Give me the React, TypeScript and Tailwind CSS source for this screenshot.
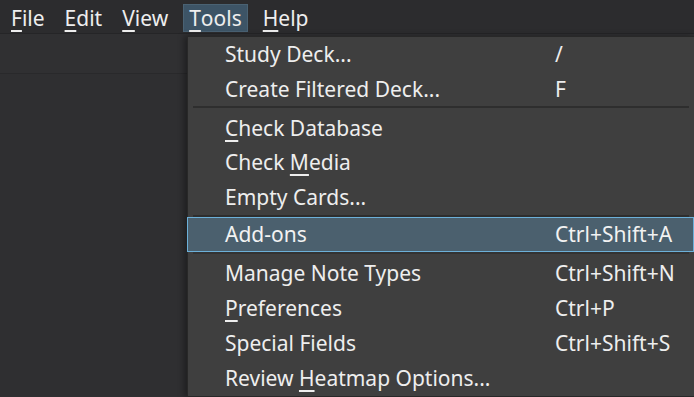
import React from "react";

const font = { fontFamily: '"Noto Sans", "Open Sans", sans-serif' };

function Mn({ text, idx }: { text: string; idx?: number }) {
  if (idx === undefined) return <>{text}</>;
  return (
    <>
      {text.slice(0, idx)}
      <span className="underline decoration-[2px] underline-offset-[4px]">{text[idx]}</span>
      {text.slice(idx + 1)}
    </>
  );
}

function Row({ label, idx, sc, h = "h-[35px]" }: { label: string; idx?: number; sc?: string; h?: string }) {
  return (
    <div className={`flex items-center ${h} pl-[37px] text-[#eeeeee]`}>
      <span className="w-[330px] whitespace-nowrap">
        <Mn text={label} idx={idx} />
      </span>
      <span className="whitespace-nowrap">{sc}</span>
    </div>
  );
}

export default function App() {
  return (
    <div className="relative w-[694px] h-[397px] overflow-hidden bg-[#2f2f31] text-[21px] leading-none" style={font}>
      {/* menubar */}
      <div className="flex h-[34px] items-stretch gap-[10px] bg-[#2c2c2e] pl-[6px] pt-[4px] pb-[1px] border-b border-[#252527] text-[#eeeeee]">
        {[
          ["File", 0],
          ["Edit", 0],
          ["View", 0],
          ["Tools", 0],
          ["Help", 0],
        ].map(([t, i]) => (
          <div
            key={t as string}
            className={`flex items-center px-[5px] ${t === "Tools" ? "bg-[#3d5466] border border-[#4a6273] px-[4px]" : ""}`}
          >
            <Mn text={t as string} idx={i as number} />
          </div>
        ))}
      </div>
      {/* toolbar strip */}
      <div className="h-[40px] bg-[#303032] border-b border-[#29292b]" />

      {/* dropdown menu */}
      <div className="absolute left-[187px] top-[36px] w-[508px] h-[361px] bg-[#3f3f3f] border border-[#282828] shadow-[-3px_0_6px_rgba(0,0,0,0.35)]">
        <Row label="Study Deck..." sc="/" />
        <Row label="Create Filtered Deck..." sc="F" h="h-[34px]" />
        <div className="h-[5px] pt-0">
          <div className="mx-[5px] h-[2px] bg-[#2e2e2e]" />
        </div>
        <Row label="Check Database" idx={0} h="h-[34px]" />
        <Row label="Check Media" idx={6} />
        <Row label="Empty Cards..." />
        <div className="h-[2px] mx-[5px] bg-[#2e2e2e]" />
        <div className="flex items-center h-[35px] -ml-px pl-[37px] bg-[#4b606e] border border-[#6cb0d9] text-[#f2f2f2]">
          <span className="w-[330px] whitespace-nowrap">Add-ons</span>
          <span className="whitespace-nowrap">Ctrl+Shift+A</span>
        </div>
        <div className="h-[4px]">
          <div className="mx-[5px] h-[2px] bg-[#333333]" />
        </div>
        <Row label="Manage Note Types" sc="Ctrl+Shift+N" />
        <Row label="Preferences" idx={0} sc="Ctrl+P" />
        <Row label="Special Fields" sc="Ctrl+Shift+S" />
        <Row label="Review Heatmap Options..." idx={7} />
      </div>
    </div>
  );
}
